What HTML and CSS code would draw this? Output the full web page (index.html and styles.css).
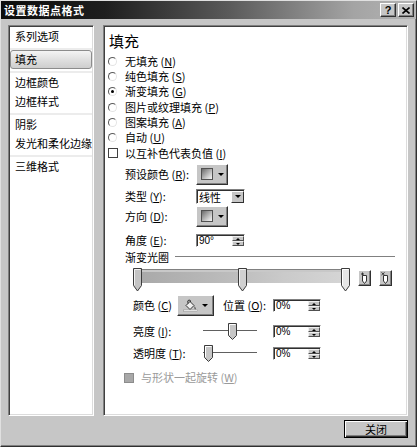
FILE: index.html
```html
<!DOCTYPE html>
<html>
<head>
<meta charset="utf-8">
<link rel="stylesheet" href="styles.css">
</head>
<body>
<div class="win">
  <div class="title">
    <span class="title-text">设置数据点格式</span>
    <div class="tbtns">
      <span class="tbtn">?</span>
      <span class="tbtn"><svg width="8" height="7" viewBox="0 0 8 7"><path d="M0.5 0.5L7.5 6.5M7.5 0.5L0.5 6.5" stroke="#000" stroke-width="1.6"/></svg></span>
    </div>
  </div>
  <div class="main">
    <div class="panel nav">
      <div class="item">系列选项</div>
      <div class="sep"></div>
      <div class="item sel">填充</div>
      <div class="sep"></div>
      <div class="item">边框颜色</div>
      <div class="item">边框样式</div>
      <div class="sep"></div>
      <div class="item">阴影</div>
      <div class="item">发光和柔化边缘</div>
      <div class="sep"></div>
      <div class="item">三维格式</div>
    </div>
    <div class="panel content">
      <div class="heading">填充</div>
      <div class="opts">
        <div class="opt"><span class="radio"></span><span>无填充 (<u>N</u>)</span></div>
        <div class="opt"><span class="radio"></span><span>纯色填充 (<u>S</u>)</span></div>
        <div class="opt"><span class="radio on"></span><span>渐变填充 (<u>G</u>)</span></div>
        <div class="opt"><span class="radio"></span><span>图片或纹理填充 (<u>P</u>)</span></div>
        <div class="opt"><span class="radio"></span><span>图案填充 (<u>A</u>)</span></div>
        <div class="opt"><span class="radio"></span><span>自动 (<u>U</u>)</span></div>
        <div class="opt"><span class="check"></span><span>以互补色代表负值 (<u>I</u>)</span></div>
      </div>
      <div class="form">
        <div class="frow r-preset">
          <span class="lbl">预设颜色 (<u>R</u>):</span>
          <span class="ddbtn"><span class="swatch"></span><span class="arrow"></span></span>
        </div>
        <div class="frow r-type">
          <span class="lbl">类型 (<u>Y</u>):</span>
          <span class="combo"><span class="combo-text">线性</span><span class="combo-btn"><span class="arrow"></span></span></span>
        </div>
        <div class="frow r-dir">
          <span class="lbl">方向 (<u>D</u>):</span>
          <span class="ddbtn"><span class="swatch"></span><span class="arrow"></span></span>
        </div>
        <div class="frow r-angle">
          <span class="lbl">角度 (<u>E</u>):</span>
          <span class="spin wide"><span class="spin-text">90°</span><span class="spin-btn"><span class="up"></span><span class="down"></span></span></span>
        </div>
        <div class="section"><span>渐变光圈</span><span class="rule"></span></div>
      </div>
      <div class="stops-row">
        <div class="gbar-wrap">
          <div class="gbar"></div>
          <svg class="stop s1" width="9" height="24" viewBox="0 0 9 24"><path d="M0.5 0.5H8.5V17.5L4.5 23L0.5 17.5Z" fill="#c4c4c4" stroke="#3c3c3c"/><path d="M1.5 17V1.5H7.5" fill="none" stroke="#f2f2f2"/></svg>
          <svg class="stop s2" width="9" height="24" viewBox="0 0 9 24"><path d="M0.5 0.5H8.5V17.5L4.5 23L0.5 17.5Z" fill="#d0d0d0" stroke="#3c3c3c"/><path d="M1.5 17V1.5H7.5" fill="none" stroke="#f2f2f2"/></svg>
          <svg class="stop s3" width="9" height="24" viewBox="0 0 9 24"><path d="M0.5 0.5H8.5V17.5L4.5 23L0.5 17.5Z" fill="#e6e6e6" stroke="#3c3c3c"/><path d="M1.5 17V1.5H7.5" fill="none" stroke="#ffffff"/></svg>
        </div>
        <span class="sbtn"><svg width="9" height="12" viewBox="0 0 9 12"><path d="M2.5 3.5H6.5V9L4.5 11.5L2.5 9Z" fill="#fff" stroke="#333"/><path d="M1 2H4M2.5 0.5V3.5" stroke="#333"/></svg></span>
        <span class="sbtn"><svg width="9" height="12" viewBox="0 0 9 12"><path d="M2.5 3.5H6.5V9L4.5 11.5L2.5 9Z" fill="#fff" stroke="#333"/><path d="M0.5 0.5L3.5 3M3.5 0.5L0.5 3" stroke="#333"/></svg></span>
      </div>
      <div class="crow r-color">
        <span class="clbl">颜色 (<u>C</u>)</span>
        <span class="ddbtn cbtn">
          <svg width="15" height="13" viewBox="0 0 15 13"><path d="M3 6.5L7 2.5L11 6.5L7 10.5Z" fill="#f0f0f0" stroke="#333"/><path d="M5 4.5Q4 1 6 1Q8 1 7.5 3" fill="none" stroke="#333"/><path d="M11.5 7Q13.5 9.5 12.5 10.5Q11 10.5 11.5 7Z" fill="#555"/><rect x="0.5" y="11" width="14" height="1.5" fill="#fff" stroke="#888" stroke-width="0.5"/></svg>
          <span class="arrow"></span>
        </span>
        <span class="plbl">位置 (<u>O</u>):</span>
        <span class="spin"><span class="spin-text">0%</span><span class="spin-btn"><span class="up"></span><span class="down"></span></span></span>
      </div>
      <div class="crow r-bright">
        <span class="slbl">亮度 (<u>I</u>):</span>
        <span class="slider"><span class="track"></span><svg class="thumb t-mid" width="9" height="17" viewBox="0 0 9 17"><path d="M0.5 0.5H8.5V12.5L4.5 16.5L0.5 12.5Z" fill="#c6c6c6" stroke="#3c3c3c"/><path d="M1.5 12V1.5H7.5" fill="none" stroke="#fff"/></svg></span>
        <span class="spin"><span class="spin-text">0%</span><span class="spin-btn"><span class="up"></span><span class="down"></span></span></span>
      </div>
      <div class="crow r-trans">
        <span class="slbl">透明度 (<u>T</u>):</span>
        <span class="slider"><span class="track"></span><svg class="thumb t-left" width="9" height="17" viewBox="0 0 9 17"><path d="M0.5 0.5H8.5V12.5L4.5 16.5L0.5 12.5Z" fill="#c6c6c6" stroke="#3c3c3c"/><path d="M1.5 12V1.5H7.5" fill="none" stroke="#fff"/></svg></span>
        <span class="spin"><span class="spin-text">0%</span><span class="spin-btn"><span class="up"></span><span class="down"></span></span></span>
      </div>
      <div class="drow"><span class="dcheck"></span><span>与形状一起旋转 (<u>W</u>)</span></div>
    </div>
  </div>
  <div class="foot"><span class="btn">关闭</span></div>
</div>
</body>
</html>
```

FILE: styles.css
```css
* { box-sizing: border-box; }
body {
  margin: 0;
  background: #c6c6c6;
  font-family: "Noto Sans CJK SC", "Noto Sans", sans-serif;
  font-size: 11px;
  color: #000;
}
u { text-decoration: underline; }

.win {
  width: 417px;
  height: 447px;
  border: 1px solid;
  border-color: #e0e0e0 #303030 #303030 #e0e0e0;
  box-shadow: inset -1px -1px #808080;
  background: #c6c6c6;
  display: flex;
  flex-direction: column;
}

.title {
  height: 18px;
  background: linear-gradient(to right, #0c0c0c 0%, #1e1e1e 25%, #5a5a5a 55%, #a4a4a4 85%, #b4b4b4 100%);
  display: flex;
  align-items: center;
  justify-content: space-between;
  padding: 0 2px 0 3px;
}
.title-text {
  color: #fff;
  font-weight: bold;
  font-size: 11px;
  line-height: 18px;
  letter-spacing: 0.5px;
}
.tbtns { display: flex; gap: 2px; }
.tbtn {
  width: 16px;
  height: 14px;
  background: #c6c6c6;
  border: 1px solid;
  border-color: #fff #303030 #303030 #fff;
  box-shadow: inset -1px -1px #808080;
  display: flex;
  align-items: center;
  justify-content: center;
  font: bold 11px "Liberation Sans", sans-serif;
  line-height: 12px;
}

.main {
  display: flex;
  gap: 9px;
  padding: 6px 8px 0 7px;
}
.panel {
  background: #fff;
  height: 391px;
  border: 1px solid;
  border-color: #808080 #fff #fff #808080;
  box-shadow: inset 1px 1px #404040, inset -1px -1px #dcdcdc;
  padding: 1px;
}
.nav { width: 86px; }
.item {
  height: 19px;
  line-height: 19px;
  padding-left: 5px;
  white-space: nowrap;
  font-size: 11px;
}
.item.sel {
  border: 1px solid #8c8c8c;
  border-radius: 3px;
  padding-left: 4px;
  line-height: 17px;
  background: linear-gradient(to bottom, #f4f4f4, #e0e0e0 50%, #cecece);
}
.sep {
  height: 4px;
  border-top: 1px solid #fff;
  border-bottom: 2px solid #ececec;
}

.content { width: 305px; }
.heading {
  margin: 4px 0 0 4px;
  height: 20px;
  line-height: 20px;
  font-size: 15px;
}
.opts { margin-top: 2.5px; padding-left: 3px; }
.opt {
  height: 15.33px;
  display: flex;
  align-items: center;
  line-height: 13px;
}
.radio {
  width: 9px;
  height: 9px;
  border-radius: 50%;
  border: 1px solid;
  border-color: #5a5a5a #e4e4e4 #e4e4e4 #5a5a5a;
  background: #fff;
  margin-right: 8px;
  position: relative;
  flex: none;
}
.radio.on::after {
  content: "";
  position: absolute;
  left: 2px;
  top: 2px;
  width: 3px;
  height: 3px;
  border-radius: 50%;
  background: #000;
}
.check {
  width: 10px;
  height: 10px;
  border: 1px solid #404040;
  background: #fff;
  margin-right: 7px;
  flex: none;
}

.form { padding-left: 20px; }
.frow { display: flex; align-items: center; line-height: 13px; }
.lbl { width: 71px; white-space: nowrap; }
.r-preset { margin-top: 3.2px; height: 21px; }
.r-type { margin-top: 4px; height: 15px; }
.r-dir { margin-top: 2px; height: 21px; }
.r-angle { margin-top: 7px; height: 13px; }

.ddbtn {
  width: 32px;
  height: 21px;
  background: #c6c6c6;
  border: 1px solid;
  border-color: #fff #303030 #303030 #fff;
  box-shadow: inset -1px -1px #808080;
  display: flex;
  align-items: center;
  justify-content: center;
  gap: 5px;
}
.swatch {
  width: 12px;
  height: 12px;
  border: 1px solid #505050;
  background: linear-gradient(135deg, #6a6a6a, #d8d8d8 75%, #f4f4f4);
}
.arrow {
  width: 0;
  height: 0;
  border-left: 3px solid transparent;
  border-right: 3px solid transparent;
  border-top: 3px solid #000;
}

.combo {
  width: 49px;
  height: 15px;
  background: #fff;
  border: 1px solid;
  border-color: #808080 #fff #fff #808080;
  box-shadow: inset 1px 1px #303030;
  display: flex;
  align-items: stretch;
  padding: 1px 0 0 1px;
}
.combo-text { flex: 1; line-height: 12px; font-size: 11px; padding-left: 1px; }
.combo-btn {
  width: 13px;
  background: #c6c6c6;
  border: 1px solid;
  border-color: #fff #303030 #303030 #fff;
  display: flex;
  align-items: center;
  justify-content: center;
}

.spin {
  width: 48px;
  height: 13px;
  background: #fff;
  border: 1px solid;
  border-color: #808080 #fff #fff #808080;
  box-shadow: inset 1px 1px #303030;
  display: flex;
  padding: 1px 0 0 1px;
}
.spin.wide { width: 49px; }
.spin-text {
  flex: 1;
  font: 10px "Liberation Sans", sans-serif;
  line-height: 10px;
  padding-left: 1px;
}
.spin-btn {
  width: 12px;
  display: flex;
  flex-direction: column;
  background: #c6c6c6;
}
.spin-btn .up, .spin-btn .down {
  flex: 1;
  position: relative;
  border: 1px solid;
  border-color: #f0f0f0 #505050 #505050 #f0f0f0;
}
.spin-btn .up::after, .spin-btn .down::after {
  content: "";
  position: absolute;
  left: 3px;
  width: 0;
  height: 0;
  border-left: 2px solid transparent;
  border-right: 2px solid transparent;
}
.spin-btn .up::after { top: 1px; border-bottom: 2px solid #000; }
.spin-btn .down::after { top: 1px; border-top: 2px solid #000; }

.section {
  margin-top: 3px;
  height: 14px;
  display: flex;
  align-items: center;
  line-height: 14px;
}
.rule {
  flex: 1;
  margin: 0 11px 0 6px;
  border-top: 1px solid #808080;
  border-bottom: 1px solid #fff;
}

.stops-row {
  margin-top: 4px;
  height: 26px;
  padding-left: 28px;
  display: flex;
  align-items: flex-start;
}
.gbar-wrap {
  position: relative;
  width: 217px;
  height: 26px;
}
.gbar {
  margin-top: 1px;
  height: 15px;
  border: 1px solid;
  border-color: #808080 #fff #fff #808080;
  background: linear-gradient(to right, #a8a8a8, #bcbcbc 45%, #cacaca 70%, #d6d6d6);
  box-shadow: inset 0 2px #c8c8c8;
}
.stop { position: absolute; top: 0; }
.s1 { left: 0; }
.s2 { left: 105px; }
.s3 { left: 208px; }
.sbtn {
  width: 13px;
  height: 16px;
  margin-top: 2px;
  margin-left: 8px;
  background: #c6c6c6;
  border: 1px solid;
  border-color: #fff #303030 #303030 #fff;
  box-shadow: inset -1px -1px #808080;
  display: flex;
  align-items: center;
  justify-content: center;
}

.crow {
  display: flex;
  align-items: center;
  padding-left: 28px;
  line-height: 13px;
}
.r-color { margin-top: 1px; height: 21px; }
.clbl { width: 44px; white-space: nowrap; }
.cbtn { width: 37px; gap: 4px; }
.plbl { width: 50px; margin-left: 9px; white-space: nowrap; }
.r-bright { margin-top: 7px; height: 18px; }
.r-trans { margin-top: 4px; height: 18px; }
.slbl { width: 70px; white-space: nowrap; }
.slider {
  position: relative;
  width: 54px;
  height: 18px;
  margin-right: 16px;
}
.track {
  position: absolute;
  left: 0;
  right: 0;
  top: 7px;
  height: 2px;
  border-top: 1px solid #606060;
  border-bottom: 1px solid #fff;
}
.thumb { position: absolute; top: 0; }
.t-mid { left: 25px; }
.t-left { left: 1px; }

.drow {
  margin-top: 8px;
  height: 14px;
  display: flex;
  align-items: center;
  padding-left: 19px;
  color: #9a9a9a;
  line-height: 13px;
}
.dcheck {
  width: 10px;
  height: 10px;
  background: #a8a8a8;
  border: 1px solid #8c8c8c;
  margin-right: 7px;
}

.foot {
  display: flex;
  justify-content: flex-end;
  padding: 4px 8px 0 0;
}
.btn {
  width: 64px;
  height: 18px;
  border: 1px solid #000;
  background: #c6c6c6;
  box-shadow: inset 1px 1px #fff, inset -1px -1px #303030, inset -2px -2px #808080;
  display: flex;
  align-items: center;
  justify-content: center;
  line-height: 14px;
  font-size: 11px;
}
```
